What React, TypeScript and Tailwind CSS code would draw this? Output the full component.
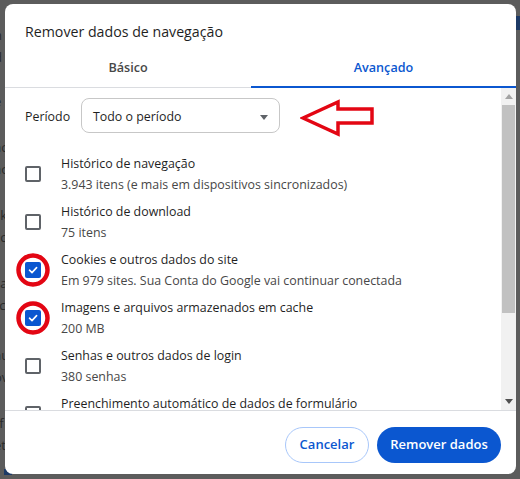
import React from "react";

const items = [
  { title: "Histórico de navegação", sub: "3.943 itens (e mais em dispositivos sincronizados)", checked: false, circle: false },
  { title: "Histórico de download", sub: "75 itens", checked: false, circle: false },
  { title: "Cookies e outros dados do site", sub: "Em 979 sites. Sua Conta do Google vai continuar conectada", checked: true, circle: true },
  { title: "Imagens e arquivos armazenados em cache", sub: "200 MB", checked: true, circle: true },
  { title: "Senhas e outros dados de login", sub: "380 senhas", checked: false, circle: false },
  { title: "Preenchimento automático de dados de formulário", sub: "", checked: false, circle: false },
];

function Checkbox({ checked, circle }: { checked: boolean; circle: boolean }) {
  return (
    <div className="relative w-[16px] h-[16px] shrink-0">
      {checked ? (
        <div className="w-[16px] h-[16px] rounded-[2px] bg-[#0b57d0] flex items-center justify-center">
          <svg width="12" height="12" viewBox="0 0 12 12">
            <path d="M2.5 6.2 L5 8.6 L9.6 3.6" fill="none" stroke="#fff" strokeWidth="1.6" strokeLinecap="round" strokeLinejoin="round" />
          </svg>
        </div>
      ) : (
        <div className="w-[16px] h-[16px] rounded-[2px] border-2 border-[#5f6368]" />
      )}
      {circle && (
        <svg className="absolute left-[-9px] top-[-9px] pointer-events-none" width="34" height="34" viewBox="0 0 34 34">
          <circle cx="17" cy="17" r="14.5" fill="none" stroke="#e30613" strokeWidth="4.5" />
        </svg>
      )}
    </div>
  );
}

export default function App() {
  const font = { fontFamily: '"Open Sans", "Noto Sans", sans-serif' };
  return (
    <div className="relative w-[520px] h-[479px] overflow-hidden bg-[#5c5c5c]" style={font}>
      <div className="absolute left-[-6px] top-[24px] text-[13px] text-[#2a2a2a] leading-[22px] flex flex-col">
        <span>h</span>
        <span>d</span>
        <span className="mt-[22px]">e</span>
        <span className="mt-[24px]">ac</span>
        <span>ao</span>
        <span className="mt-[24px]">sk</span>
        <span>cc</span>
        <span className="mt-[24px]">sa</span>
        <span>rc</span>
        <span className="mt-[28px]">au</span>
        <span>ov</span>
        <span className="mt-[24px]">rf</span>
        <span>et</span>
      </div>
      <div className="absolute right-0 top-[16px] w-[4px] h-[14px] bg-[#1d3a66]" />
      <div className="absolute left-[4px] bottom-[4px] w-[8px] h-[6px] bg-[#1d3a66]" />

      <div className="pt-[4px] pl-[5px] relative">
        <div className="w-[511px] h-[470px] bg-white rounded-[8px] overflow-hidden flex flex-col">
          <div className="h-[46px] pl-[20px] pt-[17px] text-[14.2px] leading-[22px] text-[#1f1f1f]">
            Remover dados de navegação
          </div>
          <div className="h-[38px] flex border-b border-[#dadce0] text-[12.6px] font-semibold">
            <div className="w-[246px] flex items-center justify-center text-[#474747]">Básico</div>
            <div className="flex-1 flex items-center justify-center text-[#0b57d0] border-b-2 border-[#0b57d0] mb-[-1px]">
              Avançado
            </div>
          </div>
          <div className="h-[322px] flex overflow-hidden">
            <div className="flex-1 flex flex-col pl-[20px] pt-[10px] text-[12.4px]">
              <div className="flex items-center h-[35px]">
                <div className="w-[56px] pt-[3px] text-[#1f1f1f]">Período</div>
                <div className="w-[199px] h-[35px] rounded-[8px] border border-[#c7c7c7] flex items-center justify-between pl-[11px] pr-[11px] pt-[3px] text-[#1f1f1f]">
                  <span>Todo o período</span>
                  <svg width="8" height="5" viewBox="0 0 8 5">
                    <path d="M0 0 L8 0 L4 5 Z" fill="#5f6368" />
                  </svg>
                </div>
                <svg className="ml-[20px] mt-[4px]" width="78" height="38" viewBox="0 0 78 38">
                  <polygon points="3,19 38,3 38,10 72,10 72,24 38,24 38,35" fill="none" stroke="#e30613" strokeWidth="3.5" strokeLinejoin="miter" />
                </svg>
              </div>
              <div className="mt-[17px] flex flex-col">
                {items.map((it, i) => (
                  <div key={i} className="h-[48px] flex items-center shrink-0">
                    <Checkbox checked={it.checked} circle={it.circle} />
                    <div className="ml-[20px] flex flex-col">
                      <div className="leading-[20px] text-[#1f1f1f]">{it.title}</div>
                      <div className="leading-[20px] mt-[1px] text-[#474747]">{it.sub || "\u00a0"}</div>
                    </div>
                  </div>
                ))}
              </div>
            </div>
            <div className="w-[15px] bg-[#f1f1f1] flex flex-col items-center">
              <div className="h-[17px] flex items-center justify-center">
                <svg width="8" height="5" viewBox="0 0 8 5"><path d="M0 5 L8 5 L4 0 Z" fill="#a3a3a3" /></svg>
              </div>
              <div className="w-[13px] h-[208px] bg-[#c1c1c1]" />
              <div className="flex-1" />
              <div className="h-[17px] flex items-center justify-center">
                <svg width="8" height="5" viewBox="0 0 8 5"><path d="M0 0 L8 0 L4 5 Z" fill="#505050" /></svg>
              </div>
            </div>
          </div>
          <div className="flex-1 border-t border-[#dadce0] flex justify-end items-start pt-[16px] pr-[15px] gap-[8px] text-[13px] font-semibold">
            <button className="w-[84px] h-[36px] rounded-full border border-[#a8c7fa] text-[#0b57d0] bg-white">Cancelar</button>
            <button className="w-[124px] h-[36px] rounded-full bg-[#0b57d0] text-white">Remover dados</button>
          </div>
        </div>
      </div>
    </div>
  );
}
